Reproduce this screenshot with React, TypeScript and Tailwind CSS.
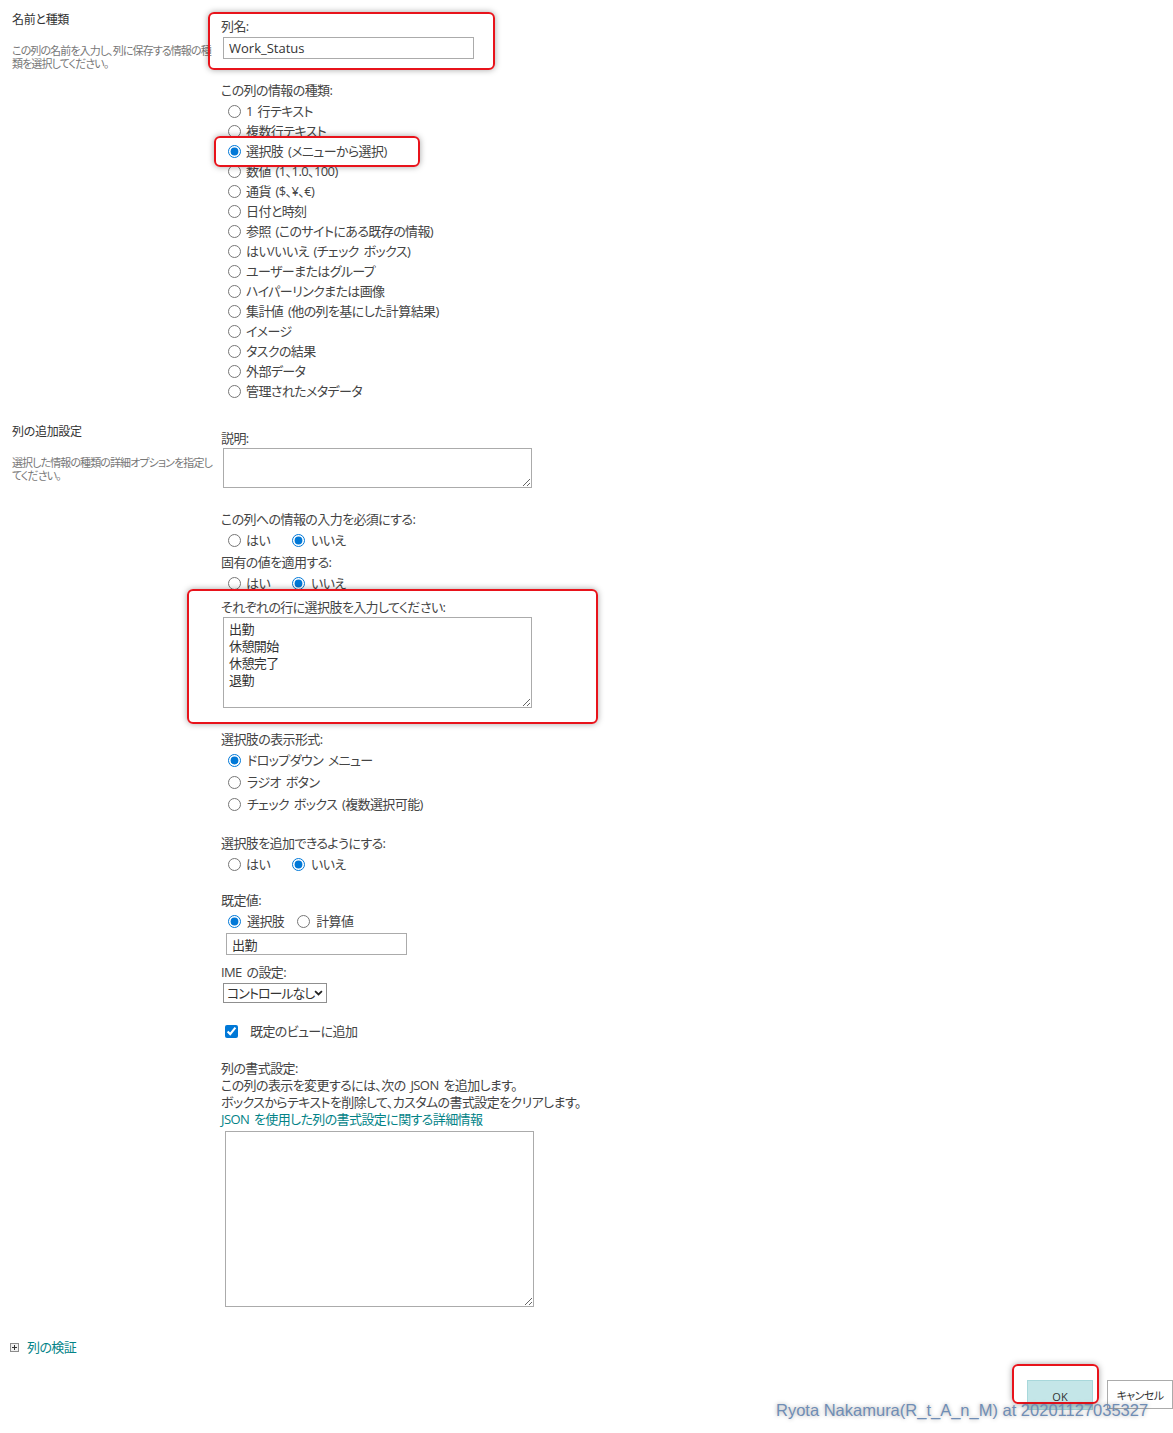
import React from 'react';

const columnTypes = [
  '1 行テキスト',
  '複数行テキスト',
  '選択肢 (メニューから選択)',
  '数値 (1、1.0、100)',
  '通貨 ($、¥、€)',
  '日付と時刻',
  '参照 (このサイトにある既存の情報)',
  'はい/いいえ (チェック ボックス)',
  'ユーザーまたはグループ',
  'ハイパーリンクまたは画像',
  '集計値 (他の列を基にした計算結果)',
  'イメージ',
  'タスクの結果',
  '外部データ',
  '管理されたメタデータ',
];

const choices = ['出勤', '休憩開始', '休憩完了', '退勤'];

function Radio({ name, label, checked, gap = 5 }: { name: string; label: string; checked?: boolean; gap?: number }) {
  return (
    <label className="flex h-full items-center whitespace-nowrap">
      <input
        type="radio"
        name={name}
        defaultChecked={checked}
        className="m-0 h-[13px] w-[13px] shrink-0 accent-[#0078d7]"
      />
      <span className={gap === 6 ? 'ml-[6px]' : 'ml-[5px]'}>{label}</span>
    </label>
  );
}

function YesNo({ name }: { name: string }) {
  return (
    <div className="mt-[3px] flex h-[20px] pl-[7px]">
      <Radio name={name} label="はい" />
      <div className="ml-[22px] h-full">
        <Radio name={name} label="いいえ" checked gap={6} />
      </div>
    </div>
  );
}

function Highlight({ className }: { className: string }) {
  return (
    <div
      className={`pointer-events-none absolute rounded-[6px] border-2 border-[#e8131b] shadow-[0_0_6px_rgba(0,0,0,0.35)] ${className}`}
    />
  );
}

export default function App() {
  return (
    <div className="relative h-[1433px] w-[1173px] overflow-hidden bg-white font-['Open_Sans','Noto_Sans_CJK_JP',sans-serif] text-[13px] leading-[16px] tracking-[-0.6px] text-[#444] [font-feature-settings:'palt'] [word-spacing:2px]">
      {/* 名前と種類 */}
      <div className="flex">
        <div className="w-[209px] shrink-0 pl-[12px] pt-[12px]">
          <h3 className="text-[12px] leading-[16px] tracking-[-0.3px] text-[#333]">名前と種類</h3>
          <p className="mt-[16px] w-[202px] text-[11px] leading-[13px] tracking-[-0.9px] text-[#777]">
            この列の名前を入力し、列に保存する情報の種類を選択してください。
          </p>
        </div>
        <div className="pl-[12px] pt-[18px]">
          <div>列名:</div>
          <input
            readOnly
            defaultValue="Work_Status"
            className="ml-[2px] mt-[3px] h-[22px] w-[251px] border border-[#ababab] px-[5px] text-[13px] tracking-normal text-[#333] outline-none"
          />
          <div className="mt-[23px]">この列の情報の種類:</div>
          <div className="mt-[3px] pl-[7px]">
            {columnTypes.map((t, i) => (
              <div key={t} className="h-[20px]">
                <Radio name="type" label={t} checked={i === 2} />
              </div>
            ))}
          </div>
        </div>
      </div>

      {/* 列の追加設定 */}
      <div className="mt-[11px] flex">
        <div className="w-[209px] shrink-0 pl-[12px] pt-[12px]">
          <h3 className="text-[12px] leading-[16px] tracking-[-0.3px] text-[#333]">列の追加設定</h3>
          <p className="mt-[16px] w-[202px] text-[11px] leading-[13px] tracking-[-0.9px] text-[#777]">
            選択した情報の種類の詳細オプションを指定してください。
          </p>
        </div>
        <div className="pl-[12px] pt-[18px]">
          <div>説明:</div>
          <textarea
            readOnly
            className="ml-[2px] mt-[2px] block h-[40px] w-[309px] border border-[#ababab] outline-none"
          />

          <div className="mt-[23px]">この列への情報の入力を必須にする:</div>
          <YesNo name="required" />
          <div className="mt-[4px]">固有の値を適用する:</div>
          <YesNo name="unique" />

          <div className="mt-[6px]">それぞれの行に選択肢を入力してください:</div>
          <textarea
            readOnly
            defaultValue={choices.join('\n')}
            className="ml-[2px] mt-[2px] block h-[91px] w-[309px] border border-[#ababab] px-[5px] pt-[3px] leading-[17px] text-[#333] outline-none"
          />

          <div className="mt-[23px]">選択肢の表示形式:</div>
          <div className="mt-[2px] pl-[7px]">
            {['ドロップダウン メニュー', 'ラジオ ボタン', 'チェック ボックス (複数選択可能)'].map((t, i) => (
              <div key={t} className="h-[22px]">
                <Radio name="display" label={t} checked={i === 0} gap={6} />
              </div>
            ))}
          </div>

          <div className="mt-[20px]">選択肢を追加できるようにする:</div>
          <YesNo name="fillin" />

          <div className="mt-[18px]">既定値:</div>
          <div className="mt-[3px] flex h-[20px] pl-[7px]">
            <Radio name="default" label="選択肢" checked gap={6} />
            <div className="ml-[13px] h-full">
              <Radio name="default" label="計算値" gap={6} />
            </div>
          </div>
          <input
            readOnly
            defaultValue="出勤"
            className="ml-[5px] mt-[2px] h-[22px] w-[181px] border border-[#ababab] px-[5px] text-[13px] text-[#333] outline-none"
          />

          <div className="mt-[9px]">IME の設定:</div>
          <div className="ml-[2px] mt-[3px] flex h-[20px] w-[104px] items-center justify-between whitespace-nowrap border border-[#8f8f8f] pl-[3px] pr-[4px] text-[#333]">
            <span className="tracking-[-1px]">コントロールなし</span>
            <svg width="9" height="6" viewBox="0 0 10 7" className="shrink-0">
              <path d="M1 1.2 L5 5.2 L9 1.2" fill="none" stroke="#222" strokeWidth="2" />
            </svg>
          </div>

          <label className="mt-[18px] flex h-[20px] items-center pl-[4px]">
            <input type="checkbox" defaultChecked className="m-0 h-[13px] w-[13px] accent-[#0078d7]" />
            <span className="ml-[12px]">既定のビューに追加</span>
          </label>

          <div className="mt-[19px] leading-[17px]">
            <div>列の書式設定:</div>
            <div>この列の表示を変更するには、次の JSON を追加します。</div>
            <div>ボックスからテキストを削除して、カスタムの書式設定をクリアします。</div>
            <a className="block text-[#038387]">JSON を使用した列の書式設定に関する詳細情報</a>
          </div>
          <textarea
            readOnly
            className="ml-[4px] mt-[3px] block h-[176px] w-[309px] border border-[#ababab] outline-none"
          />
        </div>
      </div>

      {/* 列の検証 */}
      <div className="mt-[32px] flex items-center pl-[10px]">
        <span className="flex h-[9px] w-[9px] items-center justify-center border border-[#8c8c8c] bg-[#f0f0f0]">
          <svg width="7" height="7" viewBox="0 0 7 7">
            <path d="M1 3.5 H6 M3.5 1 V6" stroke="#333" strokeWidth="1" />
          </svg>
        </span>
        <span className="ml-[8px] text-[#038387]">列の検証</span>
      </div>

      {/* buttons */}
      <div className="mt-[25px] flex justify-end gap-[14px]">
        <button
          type="button"
          className="h-[30px] w-[66px] border border-[#a8d8db] bg-[#c4e6e8] pt-[3px] text-[11px] tracking-normal text-[#333]"
        >
          OK
        </button>
        <button
          type="button"
          className="h-[29px] w-[66px] border border-[#ababab] bg-white pt-[3px] text-[11px] text-[#333]"
        >
          キャンセル
        </button>
      </div>

      {/* annotations */}
      <Highlight className="left-[208px] top-[12px] h-[58px] w-[287px]" />
      <Highlight className="left-[214px] top-[136px] h-[31px] w-[206px]" />
      <Highlight className="left-[187px] top-[589px] h-[135px] w-[411px]" />
      <Highlight className="left-[1012px] top-[1364px] h-[40px] w-[87px]" />

      <div className="pointer-events-none absolute left-[776px] top-[1400px] whitespace-nowrap font-['Liberation_Sans',sans-serif] text-[16.5px] leading-[20px] tracking-normal text-[#6f8db5] [font-feature-settings:normal] [word-spacing:0px] [text-shadow:0_0_4px_rgba(0,0,0,0.35)]">
        Ryota Nakamura(R_t_A_n_M) at 20201127035327
      </div>
    </div>
  );
}
